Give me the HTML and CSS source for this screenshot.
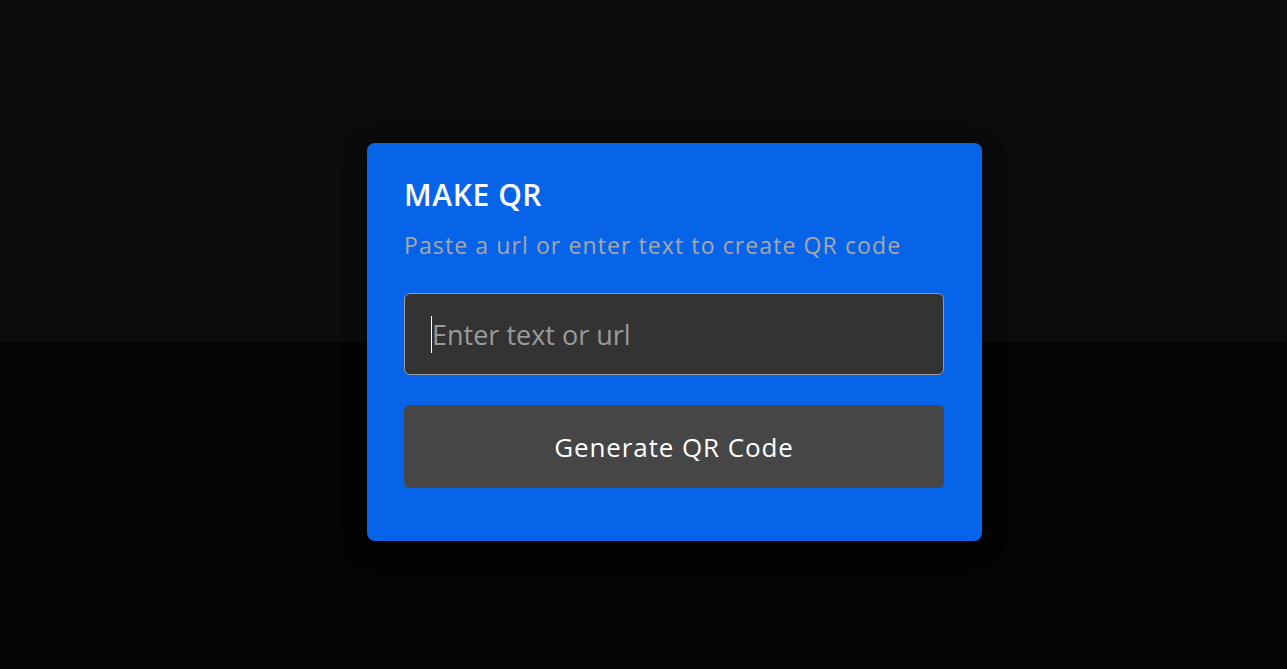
FILE: index.html
```html
<!DOCTYPE html>
<html lang="en">
<head>
<meta charset="utf-8">
<title>Make QR</title>
<link rel="stylesheet" href="styles.css">
</head>
<body>
<main class="page">
  <section class="card">
    <h1 class="title">MAKE QR</h1>
    <p class="subtitle">Paste a url or enter text to create QR code</p>
    <div class="field-wrap">
      <input class="field" type="text" placeholder="Enter text or url" autofocus>
    </div>
    <button class="btn" type="button">Generate QR Code</button>
  </section>
</main>
</body>
</html>
```

FILE: styles.css
```css
* { box-sizing: border-box; }
html, body { margin: 0; padding: 0; }
body {
  background: linear-gradient(to bottom, #0b0b0b 0, #0b0b0b 342px, #040404 342px, #040404 100%);
  min-height: 100vh;
  font-family: "Open Sans", "Liberation Sans", sans-serif;
}
.page {
  min-height: 100vh;
  display: flex;
  justify-content: center;
  align-items: flex-start;
  padding-top: 143px;
  padding-left: 62px;
}
.card {
  width: 615px;
  background: #0763e8;
  border-radius: 8px;
  padding: 32px 38px 53px 37px;
  display: flex;
  flex-direction: column;
  box-shadow: 0 6px 24px rgba(0,0,0,0.25);
}
.title {
  margin: 0;
  font-size: 30px;
  line-height: 40px;
  font-weight: 600;
  letter-spacing: 0.6px;
  color: #ffffff;
}
.subtitle {
  margin: 14px 0 0;
  font-size: 23px;
  line-height: 32px;
  letter-spacing: 1.1px;
  color: #a7a7a7;
}
.field-wrap {
  position: relative;
  margin-top: 32px;
}
.field-wrap::after {
  content: "";
  position: absolute;
  left: 27px;
  top: 23px;
  width: 1px;
  height: 37px;
  background: #ffffff;
}
.field {
  display: block;
  height: 82px;
  width: 100%;
  background: #333333;
  border: 1px solid #9a9a9a;
  border-radius: 6px;
  padding: 0 20px 0 27px;
  font-family: inherit;
  font-size: 27px;
  color: #dddddd;
  caret-color: transparent;
  outline: none;
}
.field::placeholder { color: #9a9a9a; }
.btn {
  margin-top: 30px;
  height: 83px;
  width: 100%;
  background: #464646;
  border: none;
  border-radius: 6px;
  font-family: inherit;
  font-size: 26px;
  font-weight: 500;
  letter-spacing: 0.9px;
  color: #ffffff;
  cursor: pointer;
}
```
